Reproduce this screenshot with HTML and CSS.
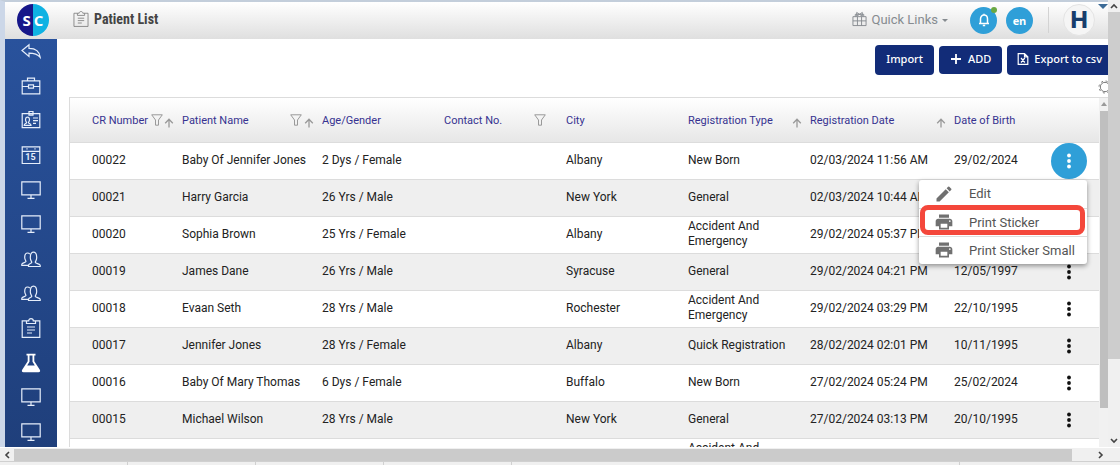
FILE: index.html
```html
<!DOCTYPE html>
<html lang="en">
<head>
<meta charset="utf-8">
<title>Patient List</title>
<link rel="stylesheet" href="styles.css">
</head>
<body>
<svg class="defs" aria-hidden="true">
  <symbol id="monitor" viewBox="0 0 20 20"><path d="M.8 1.8h18.4v13H.8zM10 15v3M6.500 18.300h7"/></symbol>
  <symbol id="people" viewBox="0 0 20 20"><path d="M7.500 17.500v-1.300c0-1.400 3.300-1.800 3.300-2.900 0-.8-1.500-1.800-1.500-4.500 0-3 .8-5.700 3.200-5.700s3.200 2.700 3.200 5.700c0 2.700-1.500 3.700-1.500 4.500 0 1.100 5 1.500 5 2.900v1.300zM8.800 5.200C8.200 4.300 7.400 4 6.500 4 4.500 4 3.700 6 3.700 8.600c0 2.200 1.300 3.200 1.300 4S.8 14 .8 15.200v1.200h6.500"/></symbol>
  <symbol id="filter" viewBox="0 0 12 12"><path d="M.7.800h10.600L7.500 6v5.200h-3V6z"/></symbol>
  <symbol id="sort" viewBox="0 0 10 10"><path d="M5 9.500V1.500M1.200 5.200 5 1.300l3.800 3.900"/></symbol>
  <symbol id="printer" viewBox="0 0 24 24"><path d="M19 8H5c-1.660 0-3 1.340-3 3v6h4v4h12v-4h4v-6c0-1.660-1.340-3-3-3zm-3 11H8v-5h8v5zm3-7c-.55 0-1-.45-1-1s.45-1 1-1 1 .45 1 1-.45 1-1 1zm-1-9H6v4h12V3z"/></symbol>
  <symbol id="clip" viewBox="0 0 20 20"><path d="M5.500 2.800H1.200v16.500h17.600V2.800h-4.300M5.500 5.500v-2.700h2.200C7.700 1.300 8.700.700 10 .700s2.300.6 2.300 2.100h2.200v2.700zM6 9h8M6 12h8M6 15h5"/></symbol>
  <symbol id="dots" viewBox="0 0 4 16"><circle cx="2" cy="2.500" r="1.900"/><circle cx="2" cy="8" r="1.900"/><circle cx="2" cy="13.500" r="1.900"/></symbol>
</svg>

<div class="window">
  <div class="viewport">
    <div class="app">
      <header class="header">
        <a class="logo" href="#" aria-label="SC home"><span>S</span><span>C</span></a>
        <svg class="title-icon"><use href="#clip"/></svg>
        <h1 class="title">Patient List</h1>
        <button class="quick" type="button">
          <svg viewBox="0 0 16 16"><path d="M1 5.500h14v9.500H1zM1 10h14M5.800 5.500V15M10.200 5.500V15M3.500 5.500V3h9v2.500M8 3 5 1v4zM8 3l3-2v4z"/></svg>
          Quick Links<i class="caret"></i>
        </button>
        <button class="round bell" type="button" aria-label="Notifications"><svg viewBox="0 0 14 14"><path d="M2 10.500h10M3.500 10.200V6c0-2.300 1.400-4 3.500-4s3.500 1.700 3.500 4v4.200M7 2V.8M5.800 12.400h2.400"/></svg><i class="badge"></i></button>
        <button class="round lang" type="button">en</button>
        <span class="divider"></span>
        <button class="avatar" type="button">H</button>
        <i class="corner"></i>
      </header>

      <div class="body">
        <nav class="sidebar">
          <a href="#" aria-label="Back"><svg viewBox="0 0 20 20"><path d="M1 9.500 8 3.700v3.600c6.500 0 10.500 2.700 11.200 9-2.700-3.300-6.200-4.200-11.200-4.200v3.400z"/></svg></a>
          <a href="#" aria-label="Work"><svg viewBox="0 0 20 20"><path d="M1.200 4.800h17.600v13H1.200zM6.500 4.800V2.200h7v2.600M1.200 10.500h6.300m5 0h6.300M7.500 8.800h5v3.400h-5z"/></svg></a>
          <a href="#" aria-label="ID card"><svg viewBox="0 0 20 20"><path d="M1.200 3.700h17.600v14H1.200zM8 1.500h4v3.700H8zM3.200 15.300c0-2 2.400-1.500 2.400-2.800-1.700-1.800-1.400-5.300.9-5.300s2.600 3.500.9 5.300c0 1.300 2.600.8 2.600 2.800zM12 8h5M12 10.700h5M12 13.400h3"/></svg></a>
          <a href="#" aria-label="Calendar" class="cal"><svg viewBox="0 0 20 20"><path d="M1.200 1.800h17.600v16.700H1.200zM1.200 6.300h17.600M6 3.200v1.300M14 3.200v1.300"/></svg><b>15</b></a>
          <a href="#" aria-label="Desk 1"><svg><use href="#monitor"/></svg></a>
          <a href="#" aria-label="Desk 2"><svg><use href="#monitor"/></svg></a>
          <a href="#" aria-label="Patients"><svg><use href="#people"/></svg></a>
          <a href="#" aria-label="Staff"><svg><use href="#people"/></svg></a>
          <a href="#" aria-label="Reports"><svg><use href="#clip"/></svg></a>
          <a href="#" aria-label="Laboratory"><svg viewBox="0 0 20 20"><path class="solid" fill-rule="evenodd" d="M5.500.8h9v1.800h-1.200v5.600l5.500 8.600c.8 1.400.2 2.400-1.300 2.400h-15c-1.500 0-2.100-1-1.300-2.400l5.500-8.600V2.600H5.500zM8.500 2.600v6.200l-2.300 3.600h7.600l-2.300-3.600V2.600z"/></svg></a>
          <a href="#" aria-label="Desk 3"><svg><use href="#monitor"/></svg></a>
          <a href="#" aria-label="Desk 4"><svg><use href="#monitor"/></svg></a>
        </nav>

        <main class="main">
          <div class="toolbar">
            <button class="btn" type="button">Import</button>
            <button class="btn add" type="button"><svg viewBox="0 0 12 12"><path d="M6 1v10M1 6h10"/></svg>ADD</button>
            <button class="btn export" type="button"><svg class="thin" viewBox="0 0 12 12"><path d="M7.500.700H1.200v10.600h9.600V3.800zM7.500.700v3.100h3.300M4 5l3.800 4.500M7.800 5 4 9.500"/></svg>Export to csv</button>
          </div>
          <div class="settings"><button type="button" aria-label="Table settings"><svg viewBox="0 0 14 14"><circle cx="7" cy="7" r="4.700"/><circle class="teeth" cx="7" cy="7" r="6"/></svg></button></div>

          <div class="grid">
            <div class="table-wrap">
              <table>
                <colgroup><col class="c-id"><col class="c-name"><col class="c-mid"><col class="c-mid"><col class="c-mid"><col class="c-mid"><col class="c-date"><col class="c-dob"><col class="c-act"></colgroup>
                <thead><tr>
                  <th><div class="th">CR Number<svg class="filter tight"><use href="#filter"/></svg><svg class="sort"><use href="#sort"/></svg></div></th>
                  <th><div class="th">Patient Name<svg class="filter"><use href="#filter"/></svg><svg class="sort"><use href="#sort"/></svg></div></th>
                  <th>Age/Gender</th>
                  <th><div class="th">Contact No.<svg class="filter end"><use href="#filter"/></svg></div></th>
                  <th>City</th>
                  <th><div class="th">Registration Type<svg class="sort last"><use href="#sort"/></svg></div></th>
                  <th><div class="th">Registration Date<svg class="sort last"><use href="#sort"/></svg></div></th>
                  <th>Date of Birth</th>
                  <th></th>
                </tr></thead>
                <tbody>
                  <tr><td>00022</td><td>Baby Of Jennifer Jones</td><td>2 Dys / Female</td><td></td><td>Albany</td><td>New Born</td><td>02/03/2024 11:56 AM</td><td>29/02/2024</td>
                    <td class="act"><div class="anchor"><button class="more open" type="button" aria-label="Actions"><svg><use href="#dots"/></svg></button>
                      <div class="menu">
                        <button type="button"><svg viewBox="0 0 24 24"><path d="M3 17.250V21h3.750L17.810 9.940l-3.750-3.750L3 17.250zM20.710 7.040a1 1 0 0 0 0-1.410l-2.340-2.340a1 1 0 0 0-1.410 0l-1.830 1.830 3.750 3.750 1.830-1.830z"/></svg>Edit</button>
                        <button type="button" class="marked"><svg><use href="#printer"/></svg>Print Sticker</button>
                        <button type="button"><svg><use href="#printer"/></svg>Print Sticker Small</button>
                      </div></div></td></tr>
                  <tr><td>00021</td><td>Harry Garcia</td><td>26 Yrs / Male</td><td></td><td>New York</td><td>General</td><td>02/03/2024 10:44 AM</td><td></td><td></td></tr>
                  <tr><td>00020</td><td>Sophia Brown</td><td>25 Yrs / Female</td><td></td><td>Albany</td><td>Accident And Emergency</td><td>29/02/2024 05:37 PM</td><td></td><td></td></tr>
                  <tr><td>00019</td><td>James Dane</td><td>26 Yrs / Male</td><td></td><td>Syracuse</td><td>General</td><td>29/02/2024 04:21 PM</td><td>12/05/1997</td><td class="act"><button class="more" type="button" aria-label="Actions"><svg><use href="#dots"/></svg></button></td></tr>
                  <tr><td>00018</td><td>Evaan Seth</td><td>28 Yrs / Male</td><td></td><td>Rochester</td><td>Accident And Emergency</td><td>29/02/2024 03:29 PM</td><td>22/10/1995</td><td class="act"><button class="more" type="button" aria-label="Actions"><svg><use href="#dots"/></svg></button></td></tr>
                  <tr><td>00017</td><td>Jennifer Jones</td><td>28 Yrs / Female</td><td></td><td>Albany</td><td class="wide">Quick Registration</td><td>28/02/2024 02:01 PM</td><td>10/11/1995</td><td class="act"><button class="more" type="button" aria-label="Actions"><svg><use href="#dots"/></svg></button></td></tr>
                  <tr><td>00016</td><td>Baby Of Mary Thomas</td><td>6 Dys / Female</td><td></td><td>Buffalo</td><td>New Born</td><td>27/02/2024 05:24 PM</td><td>25/02/2024</td><td class="act"><button class="more" type="button" aria-label="Actions"><svg><use href="#dots"/></svg></button></td></tr>
                  <tr><td>00015</td><td>Michael Wilson</td><td>28 Yrs / Male</td><td></td><td>New York</td><td>General</td><td>27/02/2024 03:13 PM</td><td>20/10/1995</td><td class="act"><button class="more" type="button" aria-label="Actions"><svg><use href="#dots"/></svg></button></td></tr>
                  <tr><td></td><td></td><td></td><td></td><td></td><td class="partial">Accident And</td><td></td><td></td><td></td></tr>
                </tbody>
              </table>
            </div>
            <div class="inner-scroll"><i class="tri-up"></i><i class="inner-thumb"></i></div>
          </div>
        </main>
      </div>
    </div>
    <div class="vscroll">
      <svg viewBox="0 0 8 6"><path d="M1 5l3-3 3 3"/></svg>
      <div class="track"><i class="vthumb"></i></div>
      <svg viewBox="0 0 8 6"><path d="M1 1l3 3 3-3"/></svg>
    </div>
  </div>
  <div class="hscroll">
    <svg viewBox="0 0 6 8"><path d="M5 1 2 4l3 3"/></svg>
    <div class="track"><i class="hthumb"></i></div>
    <svg viewBox="0 0 6 8"><path d="M1 1l3 3-3 3"/></svg>
  </div>
  <div class="sheet"><i></i><i></i><i></i><i></i><i class="broad"></i></div>
</div>
</body>
</html>
```

FILE: styles.css
```css
* { box-sizing: border-box; }
body { margin: 0; font-family: Roboto, "Liberation Sans", sans-serif; font-size: 12px; color: #222; background: #f0f0f0; }
button { font: inherit; border: 0; padding: 0; background: none; cursor: pointer; }
svg { fill: none; stroke: currentColor; flex: none; display: block; }
i { display: block; }
.defs { position: absolute; width: 0; height: 0; }

.window { display: flex; flex-direction: column; height: 100vh; overflow: hidden; }
.viewport { flex: 1; display: flex; min-height: 0; }
.app { flex: 1; min-width: 0; display: flex; flex-direction: column; border-top: 2px solid #c3cedb; border-left: 5px solid #ccd7e8; background: #fff; overflow: hidden; }

.header { position: relative; display: flex; align-items: center; height: 37px; flex: none; padding: 0 13px 1px 12px; background: linear-gradient(#fff, #dfdfdf); }
.logo { display: flex; justify-content: center; align-items: center; gap: 3px; width: 32px; height: 32px; border-radius: 50%; background: linear-gradient(90deg, #17178a 50%, #0fb2e3 50%); color: #fff; font: bold 15px "Open Sans", sans-serif; text-decoration: none; }
.title-icon { width: 16px; height: 18px; margin-left: 24px; margin-bottom: 2px; color: #777; }
.title { margin: 0 auto 0 5px; padding-bottom: 2px; font: bold 14px "Roboto Condensed", "Liberation Sans Narrow", Roboto, sans-serif; color: #444; }
.quick { display: flex; align-items: center; gap: 4px; padding-bottom: 2px; font-size: 13px; color: #868b90; }
.quick svg { width: 15px; height: 16px; }
.caret { border: 3px solid transparent; border-top-color: #868b90; margin-top: 6px; }
.round { position: relative; display: flex; justify-content: center; align-items: center; width: 27px; height: 27px; border-radius: 50%; background: #2f9fd8; color: #fff; font: bold 11px "Open Sans", sans-serif; }
.bell { margin-left: 22px; }
.bell svg { width: 14px; height: 14px; stroke-width: 1.5; }
.badge { position: absolute; top: 0; right: 0; width: 6px; height: 6px; border-radius: 50%; background: #6aa842; }
.lang { margin-left: 9px; }
.divider { width: 1px; height: 26px; margin: 0 14px 0 15px; background: #d3d3d3; }
.avatar { width: 32px; height: 32px; border: 1px solid #e4e4e4; border-radius: 50%; background: #f5f5f5; color: #173d6c; font: 800 23px/30px Inter, sans-serif; }
.corner { position: absolute; top: 2px; right: 0; border: 5px solid transparent; border-top-color: #3b6a96; border-bottom: 0; }

.body { flex: 1; display: flex; min-height: 0; }
.sidebar { display: flex; flex-direction: column; justify-content: space-between; align-items: center; width: 52px; padding: 2px 1px 5px 0; background: linear-gradient(#29529c, #1f3f7b); color: #e6eefb; }
.sidebar a { position: relative; color: inherit; text-decoration: none; }
.sidebar svg { width: 20px; height: 20px; stroke-width: 1.2; }
.sidebar .solid { fill: #fff; stroke: none; }
.cal b { position: absolute; top: 7px; left: 0; width: 100%; text-align: center; font-size: 9px; line-height: 10px; }

.main { flex: 1; min-width: 0; display: flex; flex-direction: column; padding-left: 12px; }
.toolbar { display: flex; justify-content: flex-end; align-items: center; gap: 5px; height: 41px; overflow: hidden; }
.btn { display: flex; align-items: center; height: 30px; padding: 0 11px 2px; border-radius: 4px; background: #122c78; color: #fff; font: 500 11px "Noto Sans", sans-serif; white-space: nowrap; }
.btn svg { width: 12px; height: 12px; stroke-width: 1.8; }
.btn svg.thin { stroke-width: 1.2; }
.add { height: 28px; gap: 6px; }
.export { gap: 5px; padding-right: 6px; padding-left: 10px; border-radius: 4px 0 0 4px; }
.settings { display: flex; justify-content: flex-end; height: 17px; overflow: hidden; }
.settings button { width: 14px; height: 14px; margin-right: -4px; color: #777; }
.teeth { stroke-dasharray: 2 2.700; }

.grid { flex: 1; display: flex; min-height: 0; border-top: 1px solid #dcdcdc; }
.table-wrap { flex: 1; min-width: 0; overflow: hidden; border-left: 1px solid #dcdcdc; }
table { width: 100%; table-layout: fixed; border-collapse: separate; border-spacing: 0; }
.c-id { width: 100px; } .c-name { width: 140px; } .c-mid { width: 122px; } .c-date { width: 144px; } .c-dob { width: 96px; } .c-act { width: 61px; }
th, td { padding: 0 0 0 12px; text-align: left; border-bottom: 1px solid #dcdcdc; }
th:first-child, td:first-child { padding-left: 22px; }
thead tr { background: linear-gradient(#fff, #e6e6e6); }
th { height: 45px; font-weight: 400; font-size: 11px; color: #363290; white-space: nowrap; }
.th { display: flex; align-items: center; }
.th svg { color: #999; }
.filter { width: 12px; height: 12px; margin-left: auto; }
.filter.tight { margin-left: 3px; }
.filter.end { margin-right: 8px; }
.sort { width: 10px; height: 10px; margin: 6px -4px 0 2px; stroke-width: 1.3; }
.filter.tight + .sort { margin-right: -4px; margin-left: auto; }
.sort.last { margin-left: auto; margin-right: -4px; }
td { height: 37px; padding-right: 24px; padding-bottom: 2px; line-height: 15px; }
td:nth-child(-n+5), td:nth-child(7), td:nth-child(8), td.wide { padding-right: 0; white-space: nowrap; }
td.partial { vertical-align: top; padding-top: 2px; }
tbody tr:nth-child(even) { background: #efefef; }
td.act { padding: 0; }
.anchor { position: relative; }
.more { display: flex; justify-content: center; align-items: center; width: 36px; height: 36px; margin-left: 13px; border-radius: 50%; color: #111; }
.more svg { width: 4px; height: 16px; fill: currentColor; stroke: none; }
.more.open { background: #2f9fd8; color: #fff; }
.menu { position: absolute; z-index: 2; top: 37px; right: 12px; width: 168px; background: #fff; border-radius: 3px; box-shadow: 0 2px 5px rgba(0, 0, 0, .4); }
.menu button { position: relative; display: flex; align-items: center; gap: 15px; width: 100%; height: 28px; padding-left: 15px; padding-bottom: 1px; font-size: 13px; color: #555; white-space: nowrap; }
.menu button + button { border-top: 1px solid #ddd; }
.menu svg { width: 20px; height: 20px; fill: #707070; stroke: none; }
.marked::after { content: ""; position: absolute; inset: -4px 2px 1px 1px; border: 5px solid #f4473b; border-radius: 8px; }

.inner-scroll { width: 9px; display: flex; flex-direction: column; padding-left: 1px; background: #f1f1f1; }
.tri-up { align-self: center; margin: 4px 0; border: 3px solid transparent; border-top: 0; border-bottom: 4px solid #999; }
.inner-thumb { margin-top: 1px; background: #bfbfbf; flex: none; flex-basis: 85%; }

.vscroll { width: 12px; display: flex; flex-direction: column; align-items: center; padding: 3px 0; background: #f0f0f0; color: #444; }
.vscroll svg { width: 8px; height: 6px; stroke-width: 1.6; }
.vscroll .track { flex: 1; width: 100%; padding: 3px 0; }
.vthumb { height: 82%; background: #cdcdcd; }
.hscroll { display: flex; align-items: center; height: 14px; padding: 0 16px 0 4px; background: #f0f0f0; color: #444; border-top: 1px solid #fff; }
.hscroll svg { width: 6px; height: 8px; stroke-width: 1.6; }
.hscroll .track { flex: 1; height: 12px; padding: 0 4px; }
.hthumb { width: 98%; height: 100%; background: #cbcbcb; }
.sheet { display: flex; height: 4px; border-top: 1px solid #d0d0d0; }
.sheet i { flex: none; width: 128px; border-right: 1px solid #d0d0d0; }
.sheet i.broad { width: 40%; }
```
